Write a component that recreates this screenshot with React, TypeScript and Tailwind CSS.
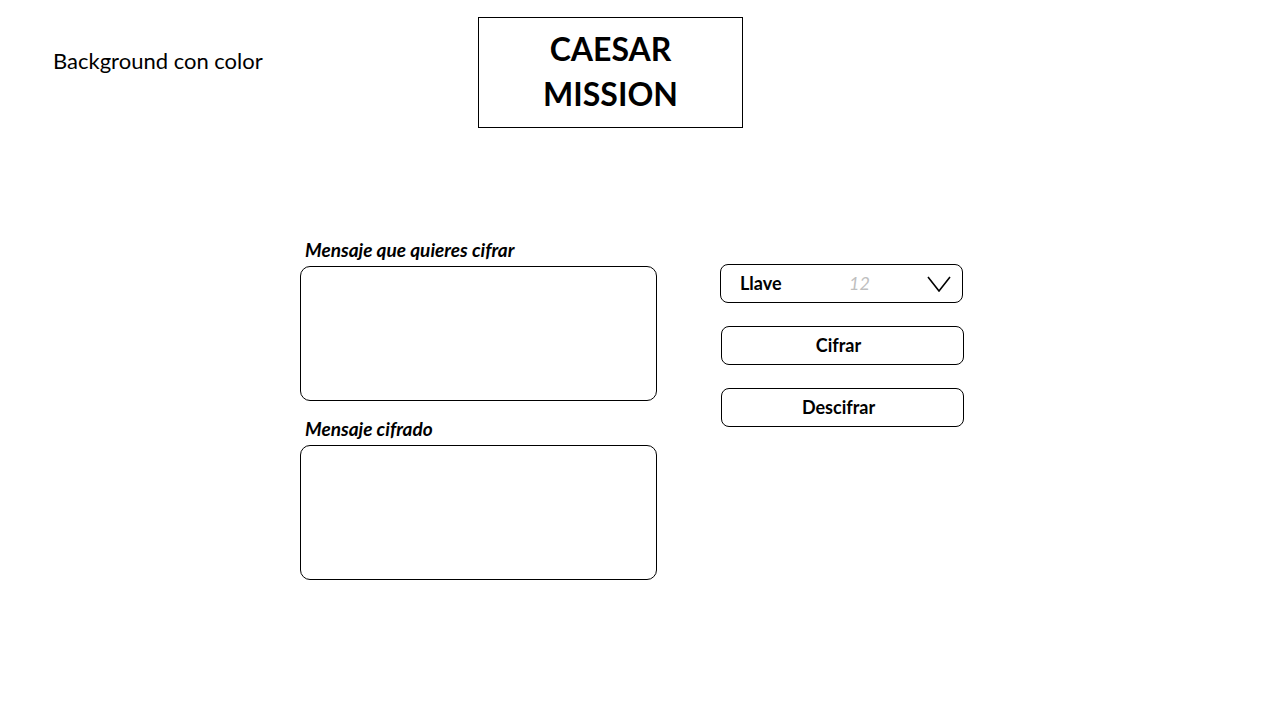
import React from 'react';

// ---------------------------------------------------------------------------------
const font = { fontFamily: 'Lato, "Open Sans", sans-serif' };

// ---------------------------------------------------------------------------------
function Field({ label, className = '' }: { label: string; className?: string }) {
  return (
    <div className={`flex flex-col ${className}`}>
      <p className="ml-[5px] h-[20px] text-[19px] leading-[20px] font-bold italic text-black">{label}</p>
      <textarea className="mt-[6px] w-[357px] h-[135px] resize-none rounded-[10px] border border-black bg-white outline-none" />
    </div>
  );
}

function Chevron() {
  return (
    <svg width="24" height="16" viewBox="0 0 24 16" fill="none">
      <path d="M1 1 L12 15 L23 1" stroke="#000" strokeWidth="1.6" strokeLinejoin="miter" />
    </svg>
  );
}

// ---------------------------------------------------------------------------------
export default function App() {
  const [key] = React.useState(12);

  return (
    <div className="w-[1280px] h-[720px] bg-white text-black" style={font}>
      {/* header */}
      <div className="flex items-start pt-[17px]">
        <p className="ml-[53px] mt-[30px] w-[425px] text-[22px] leading-[28px]">Background con color</p>
        <div className="flex w-[265px] h-[111px] flex-col items-center justify-center border border-black">
          <p className="-mt-[3px] text-[32px] leading-[45px] font-bold">CAESAR</p>
          <p className="text-[32px] leading-[45px] font-bold">MISSION</p>
        </div>
      </div>

      {/* main */}
      <div className="flex mt-[112px] ml-[300px]">
        <div className="flex flex-col">
          <Field label="Mensaje que quieres cifrar" />
          <Field label="Mensaje cifrado" className="mt-[18px]" />
        </div>

        <div className="flex flex-col ml-[63px] mt-[24px]">
          <div className="flex items-center w-[243px] h-[39px] rounded-[8px] border border-black pl-[19px] pr-[11px]">
            <span className="w-[109px] text-[18px] font-bold">Llave</span>
            <span className="flex-1 text-[18px] italic text-[#bfbfbf]">{key}</span>
            <Chevron />
          </div>
          <button className="mt-[23px] ml-px w-[243px] h-[39px] pr-[8px] rounded-[8px] border border-black text-[18px] font-bold">
            Cifrar
          </button>
          <button className="mt-[23px] ml-px w-[243px] h-[39px] pr-[8px] rounded-[8px] border border-black text-[18px] font-bold">
            Descifrar
          </button>
        </div>
      </div>
    </div>
  );
}
